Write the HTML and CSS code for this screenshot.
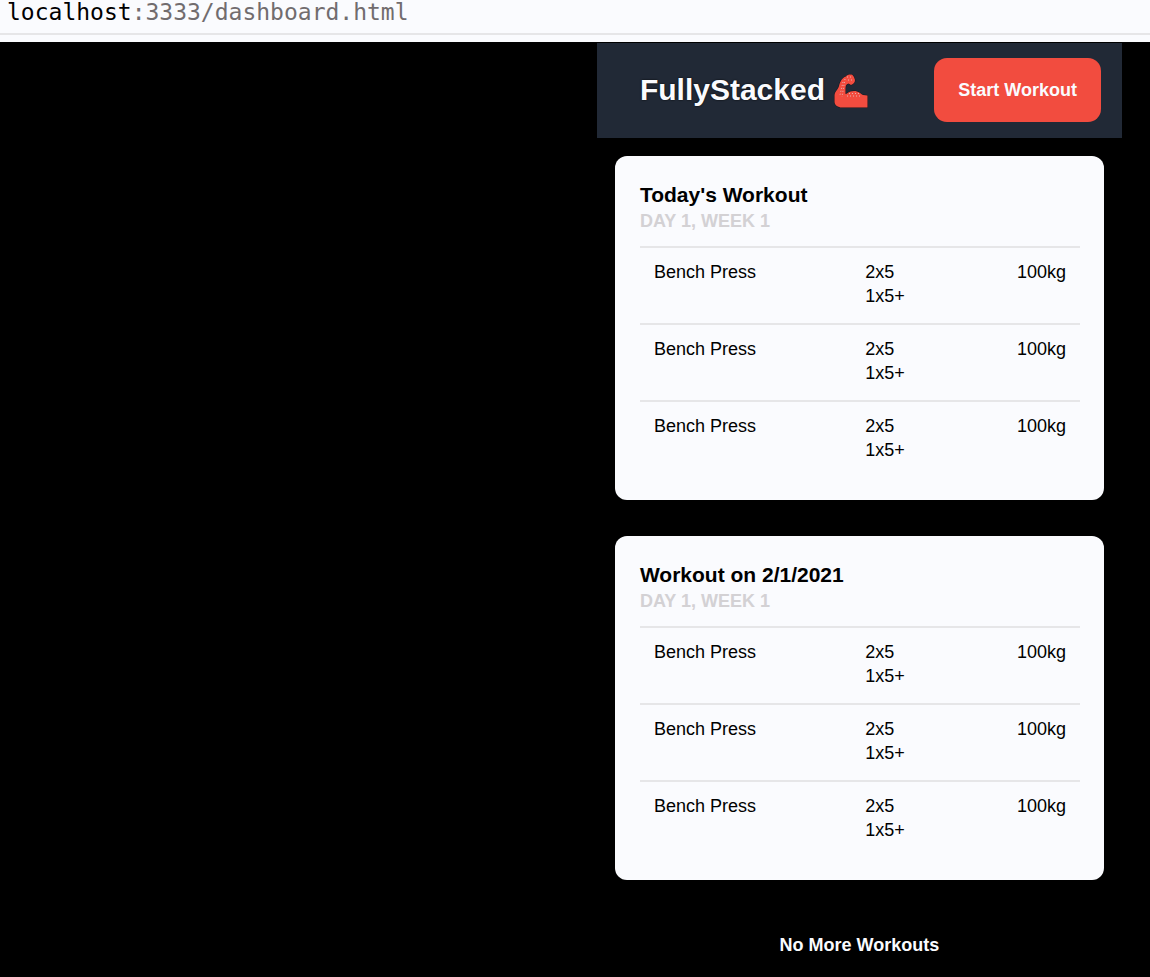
FILE: index.html
```html
<!DOCTYPE html>
<html lang="en">
<head>
  <meta charset="utf-8">
  <meta name="viewport" content="width=device-width, initial-scale=1">
  <title>FullyStacked</title>
  <link rel="stylesheet" href="styles.css">
</head>
<body>
  <div class="address-bar"><span class="address-host">localhost</span>:3333/dashboard.html</div>
  <div class="stage">
    <div class="app">
      <header class="app-header">
        <h1 class="brand">FullyStacked
          <svg class="brand-icon" viewBox="0 0 35 35" aria-hidden="true">
            <path fill="#f24c3f" stroke="#10151d" stroke-width="1" paint-order="stroke" d="M0.500 29 V22 C1 18 4 17 5 13 C6 8 9 4 12 3.500 C13 1.500 17 1 18.500 2 L20 4 L21 7 C21 10 19 11 17 12 L14.500 10.500 C12 11 11.500 13 11.500 16 V21 L13 20.500 C16 18 20 17.500 23 18.500 C26 19 27 21.500 29 22 L33.500 22.500 V34.500 H8 C4 34.500 0.500 32 0.500 29 Z"/>
            <path fill="none" stroke="#e3b3b1" stroke-width="1" stroke-dasharray="1 2" d="M13 4 H19 M14 7 H20 M9 9 L6 22 M11 6 L8 24 M15 20.500 H27 M13 23 H26"/>
          </svg>
        </h1>
        <button class="start-button" type="button">Start Workout</button>
      </header>
      <main class="workouts">
        <section class="card">
          <h2 class="card-title">Today's Workout</h2>
          <p class="card-subtitle">DAY 1, WEEK 1</p>
          <table class="exercises" aria-label="Today's Workout">
            <tbody>
              <tr><td class="name">Bench Press</td><td class="sets">2x5<br>1x5+</td><td class="weight">100kg</td></tr>
              <tr><td class="name">Bench Press</td><td class="sets">2x5<br>1x5+</td><td class="weight">100kg</td></tr>
              <tr><td class="name">Bench Press</td><td class="sets">2x5<br>1x5+</td><td class="weight">100kg</td></tr>
            </tbody>
          </table>
        </section>
        <section class="card">
          <h2 class="card-title">Workout on 2/1/2021</h2>
          <p class="card-subtitle">DAY 1, WEEK 1</p>
          <table class="exercises" aria-label="Workout on 2/1/2021">
            <tbody>
              <tr><td class="name">Bench Press</td><td class="sets">2x5<br>1x5+</td><td class="weight">100kg</td></tr>
              <tr><td class="name">Bench Press</td><td class="sets">2x5<br>1x5+</td><td class="weight">100kg</td></tr>
              <tr><td class="name">Bench Press</td><td class="sets">2x5<br>1x5+</td><td class="weight">100kg</td></tr>
            </tbody>
          </table>
        </section>
        <p class="end-note">No More Workouts</p>
      </main>
    </div>
  </div>
</body>
</html>
```

FILE: styles.css
```css
* {
  box-sizing: border-box;
}

body {
  margin: 0;
  min-height: 100vh;
  display: flex;
  flex-direction: column;
  background: #000;
  color: #000;
  font-family: "Liberation Sans", Arial, sans-serif;
  font-size: 18px;
  line-height: 24px;
}

h1,
h2,
p {
  margin: 0;
}

.address-bar {
  padding: 0 7px 9px;
  border-bottom: 2px solid #e6e6e8;
  box-shadow: 0 7px 0 #fafbfe;
  background: #fafbfe;
  color: #716c6e;
  font-family: "DejaVu Sans Mono", monospace;
  font-size: 23px;
}

.address-host {
  color: #000;
}

.stage {
  display: flex;
  justify-content: flex-end;
  padding: 8px 28px 0;
}

.app {
  width: 48%;
  min-width: 525px;
}

.app-header {
  display: flex;
  align-items: center;
  justify-content: space-between;
  padding: 15px 21px 16px 43px;
  background: #212936;
}

.brand {
  display: flex;
  align-items: center;
  gap: 9px;
  color: #fafbfe;
  font-size: 30px;
  line-height: 36px;
  text-shadow: 0 0 2px #000;
}

.brand-icon {
  width: 35px;
  height: 35px;
}

.start-button {
  padding: 20px 24px;
  border: 0;
  border-radius: 13px;
  background: #f24c3f;
  color: #fafbfe;
  font: inherit;
  font-weight: bold;
}

.workouts {
  display: flex;
  flex-direction: column;
  gap: 36px;
  padding: 18px;
}

.card {
  padding: 25px 24px 23px 25px;
  border-radius: 12px;
  background: #fafbfe;
}

.card-title {
  font-size: 21px;
  line-height: 28px;
}

.card-subtitle {
  margin-bottom: 13px;
  color: #d3d1d4;
  font-weight: bold;
}

.exercises {
  width: 100%;
  border-spacing: 0;
  table-layout: fixed;
}

.exercises td {
  padding: 12px 14px 15px;
  border-top: 2px solid #e6e6e8;
  vertical-align: top;
}

.exercises .name {
  width: 48%;
}

.exercises .sets {
  width: 26%;
}

.exercises .weight {
  width: 26%;
  text-align: right;
}

.end-note {
  padding-top: 17px;
  color: #fafbfe;
  font-weight: bold;
  text-align: center;
}
```
